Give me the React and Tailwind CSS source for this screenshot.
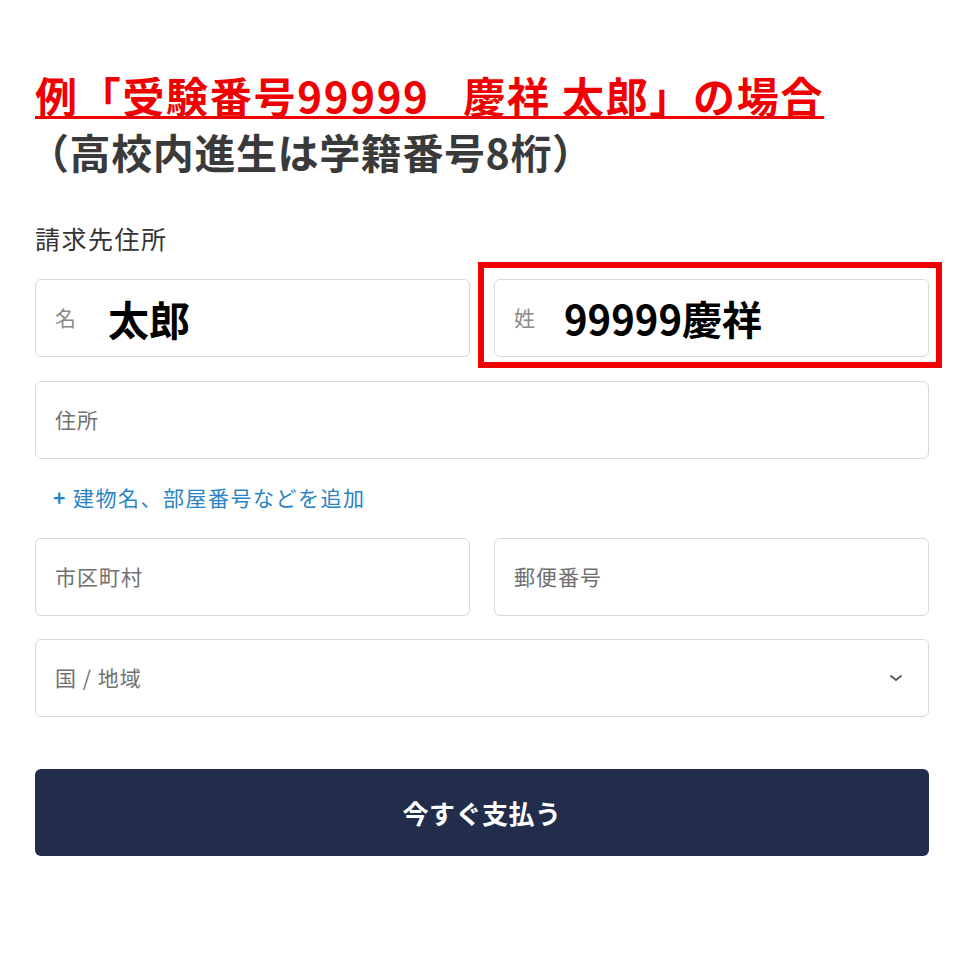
import React from "react";

const font = { fontFamily: '"Noto Sans CJK JP", "Noto Sans", sans-serif' };

function Field({ className = "", children }) {
  return (
    <div
      className={`h-[78px] rounded-[6px] border border-[#d9d9d9] bg-white flex items-center px-[19px] ${className}`}
    >
      {children}
    </div>
  );
}

export default function App() {
  return (
    <div
      className="w-[964px] h-[964px] bg-white px-[35px] pt-[70px] text-[#333]"
      style={font}
    >
      <h1 className="text-[42px] font-bold leading-[50px] text-[#f00000] underline decoration-[3px] underline-offset-[3px] whitespace-pre tracking-[1.7px]">
        {"例「受験番号99999   慶祥 太郎」の場合"}
      </h1>
      <h2 className="text-[41px] font-bold leading-[50px] text-[#3a3a3a] mt-[6px] -ml-[7px] tracking-[0.6px]">
        （高校内進生は学籍番号8桁）
      </h2>

      <div className="mt-[47px] text-[25px] leading-[30px] tracking-[1.5px] text-[#333]">請求先住所</div>

      <div className="mt-[26px] grid grid-cols-2 gap-[24px]">
        <Field>
          <span className="text-[21px] text-[#8a8a8a] w-[53px]">名</span>
          <span className="text-[41px] font-bold text-black leading-none">太郎</span>
        </Field>
        <div className="relative">
          <div className="absolute left-[-16px] top-[-17px] right-[-13px] bottom-[-11px] border-[6px] border-[#f00000] pointer-events-none" />
          <Field>
            <span className="text-[21px] text-[#8a8a8a] w-[50px]">姓</span>
            <span className="text-[40px] font-semibold text-black leading-none">99999慶祥</span>
          </Field>
        </div>
      </div>

      <Field className="mt-[24px]">
        <span className="text-[21px] tracking-[1px] text-[#707070]">住所</span>
      </Field>

      <div className="mt-[24px] ml-[18px] text-[21px] leading-[28px] tracking-[1.5px] text-[#2a83c4]">
        <span className="font-bold mr-[6px]">+</span>建物名、部屋番号などを追加
      </div>

      <div className="mt-[27px] grid grid-cols-2 gap-[24px]">
        <Field>
          <span className="text-[21px] tracking-[1px] text-[#707070]">市区町村</span>
        </Field>
        <Field>
          <span className="text-[21px] tracking-[1px] text-[#707070]">郵便番号</span>
        </Field>
      </div>

      <Field className="mt-[23px] justify-between pr-[25px]">
        <span className="text-[21px] tracking-[1px] text-[#707070]">国 / 地域</span>
        <svg width="14" height="10" viewBox="0 0 14 10" fill="none">
          <path d="M2 3l5 4 5-4" stroke="#555" strokeWidth="1.8" strokeLinecap="round" strokeLinejoin="round" />
        </svg>
      </Field>

      <button className="mt-[52px] w-full h-[87px] rounded-[6px] bg-[#222d4b] text-white text-[26px] font-bold tracking-[0.5px] flex items-center justify-center">
        今すぐ支払う
      </button>
    </div>
  );
}
